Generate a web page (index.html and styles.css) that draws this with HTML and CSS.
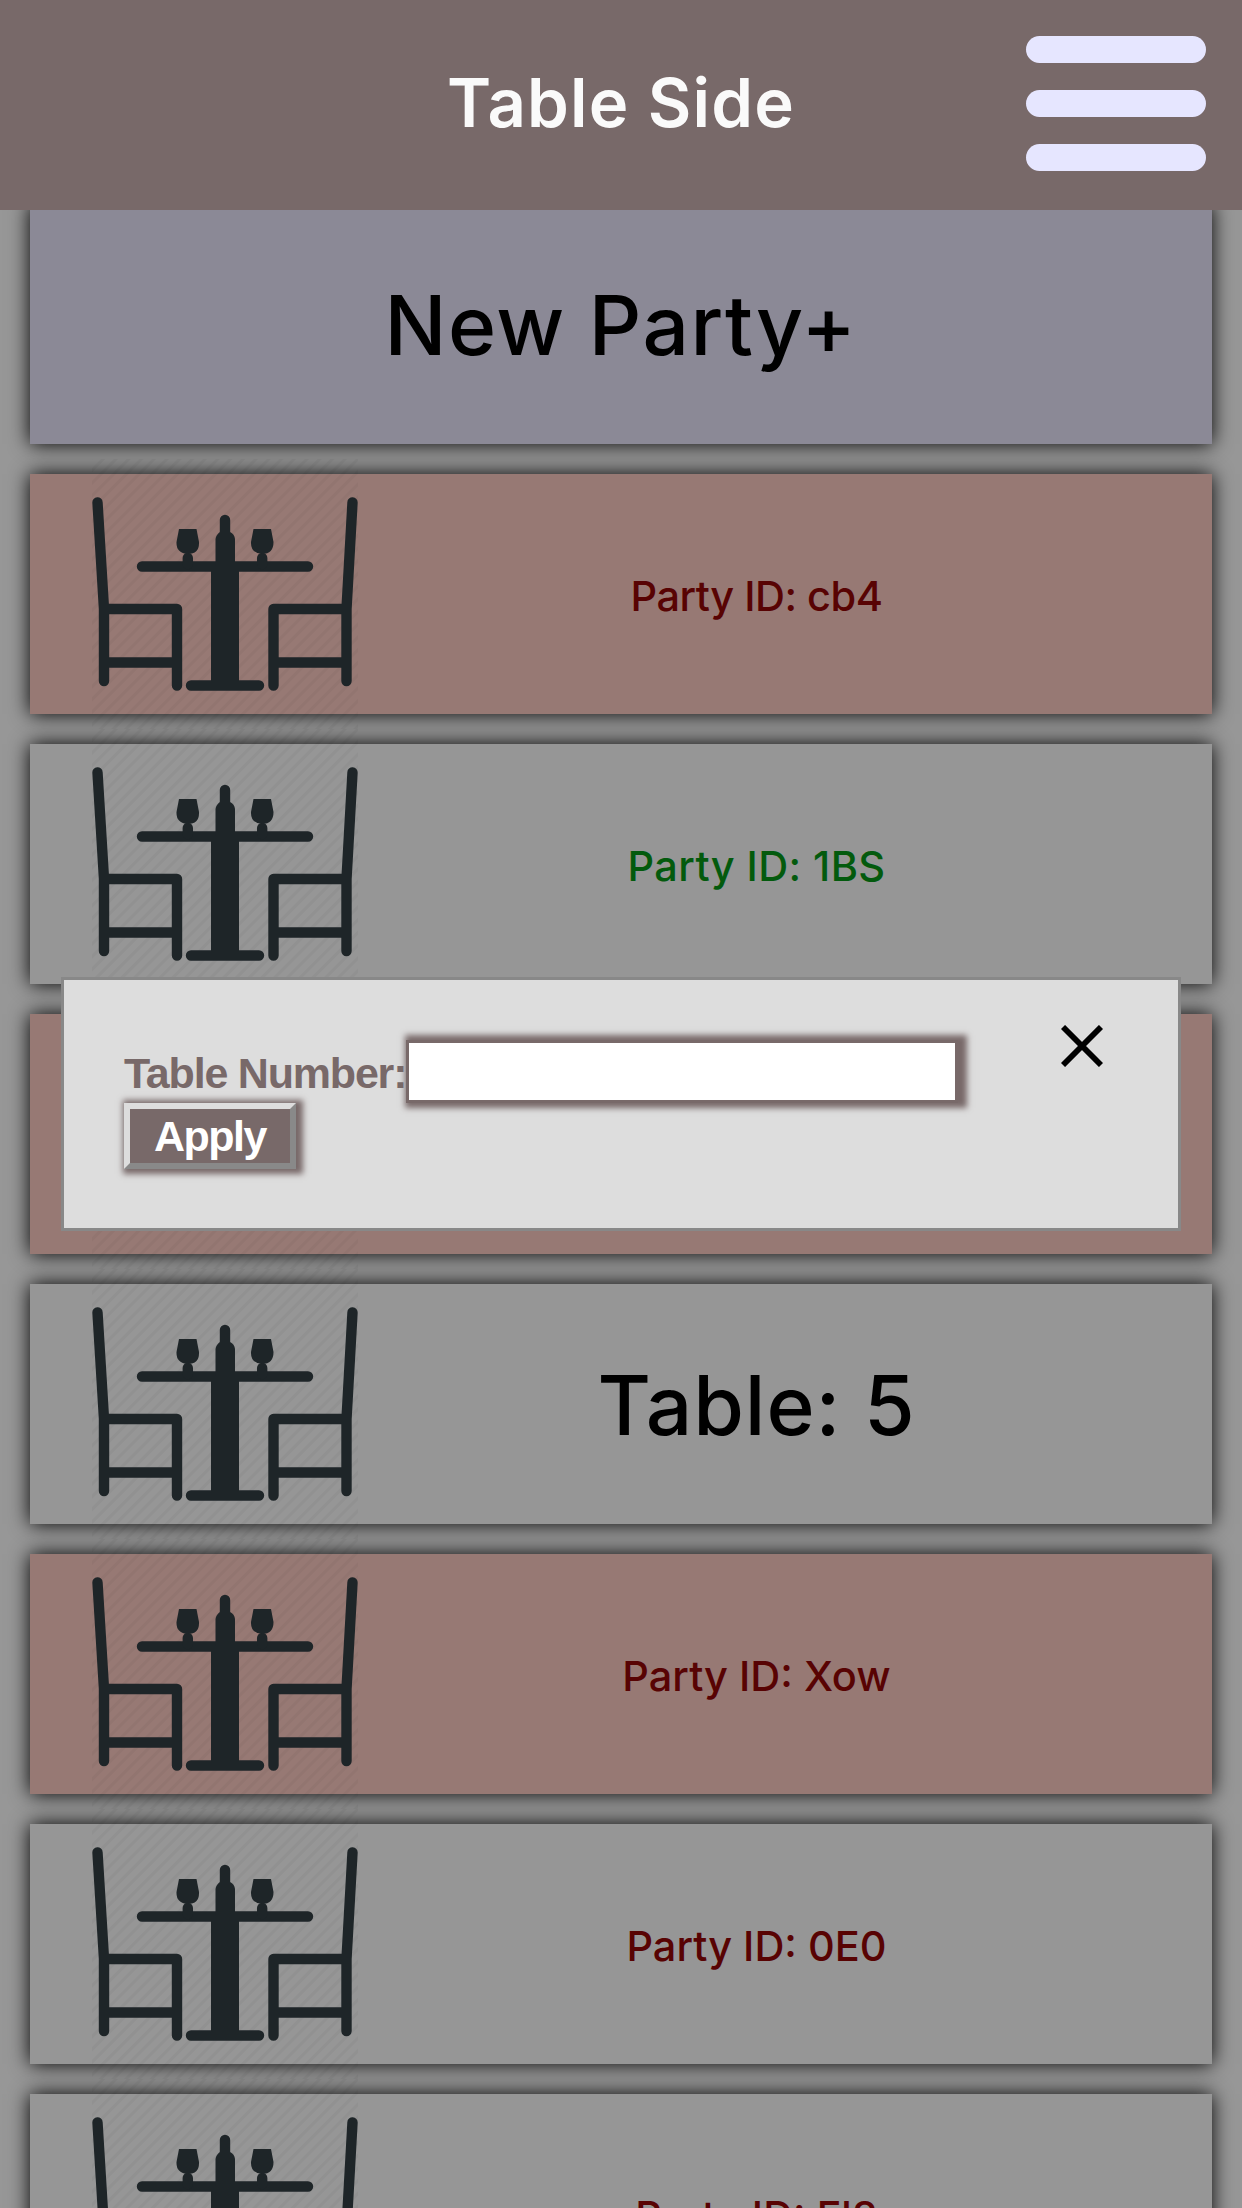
FILE: index.html
```html
<!DOCTYPE html>
<html lang="en"><head><meta charset="utf-8"><title>Table Side</title><link rel="stylesheet" href="styles.css"></head>
<body>
<svg width="0" height="0" class="defs"><defs>
<pattern id="stripes" width="9" height="9" patternUnits="userSpaceOnUse" patternTransform="rotate(45)"><rect width="3" height="9" fill="#000" fill-opacity=".035"/></pattern>
<symbol id="dining" viewBox="0 29 266 270">
<rect y="29" width="266" height="270" fill="url(#stripes)"/>
<g fill="none" stroke="#1e2528" stroke-width="10.4" stroke-linecap="round" stroke-linejoin="round">
<path d="M5.500 72.500L12 179V251M12 179H85V255.500M12 232.500H85"/>
<path d="M260.500 72.500L254.500 179V251M254.500 179H181.500V255.500M254.500 232.500H181.500"/>
<path d="M50 136.500H216M99 255.500H167"/><path d="M133 90V120M95.800 128V134M170.200 128V134"/></g>
<g fill="#1e2528"><path d="M119 140H147V255H119zM123.500 136V109Q124 105 128 102H138Q142.500 104 143 109V136zM87 99H104.500L107 112Q107.500 124 95.800 124Q84 123 84.500 112zM161.500 99H179L181.500 112Q181.500 124 170.200 124Q158.500 123 159 112z"/></g>
</symbol></defs></svg>
<header class="bar"><h1 class="title">Table Side</h1><div class="burger"><span></span><span></span><span></span></div></header>
<main class="list">
<div class="card new">New Party+</div>
<div class="card red"><svg class="icon"><use href="#dining"/></svg><span class="party tight">Party ID: cb4</span></div>
<div class="card"><svg class="icon"><use href="#dining"/></svg><span class="party green">Party ID: 1BS</span></div>
<div class="card red"><svg class="icon"><use href="#dining"/></svg><span class="party"></span></div>
<div class="card"><svg class="icon"><use href="#dining"/></svg><span class="table">Table: 5</span></div>
<div class="card red"><svg class="icon"><use href="#dining"/></svg><span class="party">Party ID: Xow</span></div>
<div class="card"><svg class="icon"><use href="#dining"/></svg><span class="party">Party ID: 0E0</span></div>
<div class="card"><svg class="icon"><use href="#dining"/></svg><span class="party">Party ID: Fl8</span></div>
</main>
<form class="modal">
<div class="fields"><div class="row"><label for="num">Table Number:</label><input id="num" type="text"></div><button type="button" class="apply">Apply</button></div>
<svg class="close" viewBox="0 0 42 42"><path d="M2 2L40 40M40 2L2 40" stroke="#000" stroke-width="5.800"/></svg>
</form>
</body></html>
```
FILE: styles.css
```css
* { box-sizing: border-box; }
body { margin: 0; height: 2208px; overflow: hidden; background: #979797; font-family: Inter, "Open Sans", sans-serif; }
.defs { position: absolute; }
.bar { position: relative; z-index: 2; height: 210px; background: #786969; display: grid; grid-template-columns: 1fr auto 1fr; align-items: center; padding: 0 36px 3px; }
.title { grid-column: 2; margin: 0; font-size: 67px; line-height: 80px; font-weight: 600; color: #fafafa; letter-spacing: 1.2px; transform: translateY(-1px); }
.burger { justify-self: end; width: 180px; display: flex; flex-direction: column; gap: 27px; }
.burger span { height: 27px; border-radius: 14px; background: #e6e6ff; }
.list { display: flex; flex-direction: column; gap: 30px; height: 2004px; overflow: hidden; padding: 0 30px; margin-top: -6px; }
.card { flex: none; height: 240px; background: #969696; box-shadow: 0 0 19px #000; display: grid; grid-template-columns: 390px 1fr; align-items: center; justify-items: center; padding-right: 119px; }
.card.new { display: flex; justify-content: center; padding: 3px 0 0; background: #8b8996; font-size: 82px; font-weight: 500; letter-spacing: 1.4px; }
.card.red { background: #977974; }
.icon { width: 266px; height: 270px; margin: -15px 0; }
.party { font-size: 41.500px; font-weight: 500; color: #580303; padding-top: 4px; white-space: nowrap; }
.party.tight { letter-spacing: -0.5px; }
.party.green { color: #035a0d; letter-spacing: 0.4px; }
.table { font-size: 82px; font-weight: 500; letter-spacing: 0.9px; padding-top: 2px; }
.modal { position: absolute; z-index: 3; left: 61px; top: 977px; width: 1120px; height: 254px; background: #ddd; border: 3px solid #888; display: flex; justify-content: space-between; padding: 60px 75px 0 60px; font-family: "Liberation Sans", Arial, sans-serif; }
.row { display: flex; align-items: center; color: #786969; font-size: 43px; font-weight: 700; letter-spacing: -1.2px; }
.row label { padding-top: 4px; }
.row input { width: 552px; height: 63px; border: 3px solid #786969; border-radius: 0; background: #fff; box-shadow: 4px 0 6px 5px #786969; }
.apply { display: block; width: 172px; height: 66px; padding: 0; border: 6px outset #ddd; background: #786969; color: #fff; font: 700 43px "Liberation Sans", Arial, sans-serif; letter-spacing: -1.5px; box-shadow: 3px 1px 6px 4px #786969; }
.close { width: 42px; height: 42px; margin-top: -15px; }
```
